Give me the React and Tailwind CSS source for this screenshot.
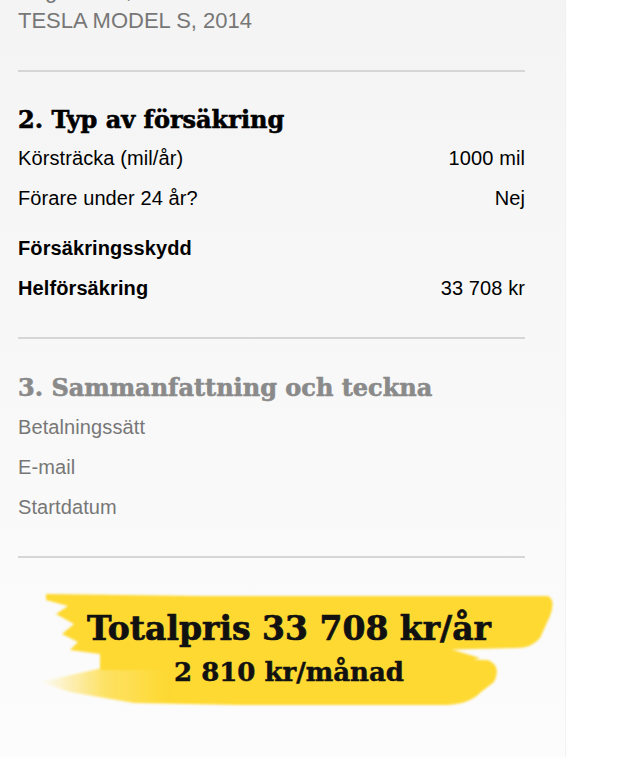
import React from "react";

const slab = { fontFamily: '"DejaVu Serif", "Liberation Serif", serif' };

const Row = ({ label, value, bold, muted }) => (
  <div
    className={`flex h-10 items-center justify-between text-[20px] tracking-[0.1px] ${
      muted ? "text-[#777]" : "text-black"
    }`}
  >
    <span className={bold ? "font-bold" : ""}>{label}</span>
    {value && <span>{value}</span>}
  </div>
);

const Divider = () => <div className="h-[2px] bg-[#d6d6d6]" />;

// yellow paint stroke behind the total price
const Brush = () => (
  <svg viewBox="0 0 565 200" className="absolute inset-0 h-full w-full">
    <defs>
      <filter id="soft" x="-5%" y="-20%" width="110%" height="140%">
        <feGaussianBlur stdDeviation="1.1" />
      </filter>
      <linearGradient id="fade" gradientUnits="userSpaceOnUse" x1="40" x2="170" y1="0" y2="0">
        <stop offset="0" stopColor="#fed931" stopOpacity="0" />
        <stop offset="0.5" stopColor="#fed931" stopOpacity="0.75" />
        <stop offset="1" stopColor="#fed931" />
      </linearGradient>
    </defs>
    <g filter="url(#soft)">
      <path
        fill="#fed931"
        d="M46 36 L200 38 L400 38 L548 38 Q556 42 550 58 L540 80 Q532 90 516 90 L436 92 L100 96 L70 92 L78 84 L62 76 L74 66 L56 56 L68 48 L46 42 Z"
      />
      <path fill="#fed931" d="M100 88 L440 88 L480 100 L440 112 L100 112 Z" />
      <path
        fill="url(#fade)"
        d="M40 124 L120 106 L300 100 L488 102 Q502 108 494 124 L481 134 Q470 146 447 147 L240 147 L134 145 L70 134 Z"
      />
    </g>
  </svg>
);

export default function App() {
  return (
    <div
      className="min-h-screen bg-white"
      style={{ fontFamily: '"Liberation Sans", Arial, sans-serif' }}
    >
      <div className="h-[757px] w-[565px] overflow-hidden bg-gradient-to-b from-[#f4f4f4] to-[#fcfcfc] shadow-[1px_0_1px_rgba(0,0,0,0.05)]">
        <div className="w-[525px] pl-[18px]">
          {/* 1. vehicle */}
          <div className="-mt-[24px] pb-[34px] text-[22px] text-[#777]">
            <div className="leading-[30px]">Angiven bil, ABC 123</div>
            <div className="leading-[30px]">TESLA MODEL S, 2014</div>
          </div>
          <Divider />

          {/* 2. insurance type */}
          <div className="pt-[31px] pb-[29px]">
            <h2
              className="mb-[1px] h-[34px] text-[24px] font-bold leading-[34px] text-black [-webkit-text-stroke:0.6px_currentColor]"
              style={slab}
            >
              2. Typ av försäkring
            </h2>
            <Row label="Körsträcka (mil/år)" value="1000 mil" />
            <Row label="Förare under 24 år?" value="Nej" />
            <div className="h-[10px]" />
            <Row label="Försäkringsskydd" bold />
            <Row label="Helförsäkring" value="33 708 kr" bold />
          </div>
          <Divider />

          {/* 3. summary */}
          <div className="pt-[32px] pb-[29px]">
            <h2
              className="mb-[2px] h-[34px] text-[24px] font-bold leading-[34px] text-[#8a8a8a] [-webkit-text-stroke:0.6px_currentColor]"
              style={slab}
            >
              3. Sammanfattning och teckna
            </h2>
            <Row label="Betalningssätt" muted />
            <Row label="E-mail" muted />
            <Row label="Startdatum" muted />
          </div>
          <Divider />
        </div>

        {/* total */}
        <div className="relative h-[200px]">
          <Brush />
          <div
            className="relative flex flex-col items-center pt-[51px] pl-[13px] text-[#111]"
            style={slab}
          >
            <div className="text-[33px] font-bold leading-[40px] [-webkit-text-stroke:0.7px_currentColor]">
              Totalpris 33 708 kr/år
            </div>
            <div className="mt-[8px] text-[26px] font-bold leading-[30px] [-webkit-text-stroke:0.5px_currentColor]">
              2 810 kr/månad
            </div>
          </div>
        </div>
      </div>
    </div>
  );
}
